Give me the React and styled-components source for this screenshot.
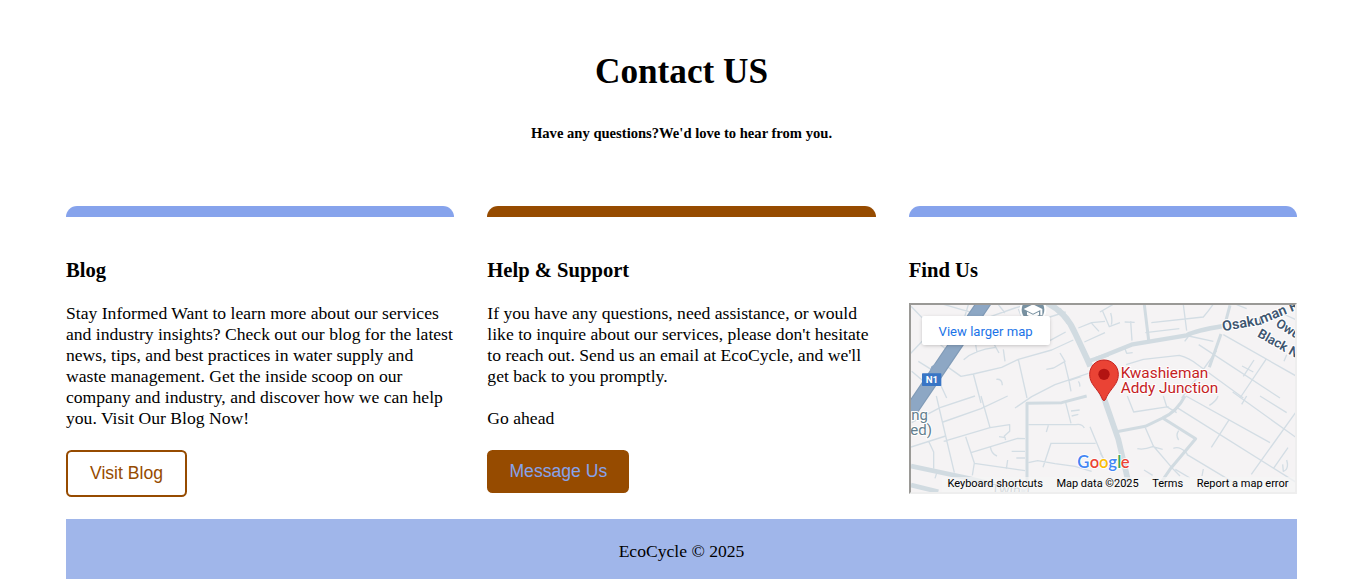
import React from "react";
import styled, { createGlobalStyle } from "styled-components";

const GlobalStyle = createGlobalStyle`
  * { box-sizing: border-box; }
  html, body { margin: 0; background: #fff; overflow: hidden; }
  body {
    color: #000;
    font-family: "Liberation Serif", "Times New Roman", serif;
    font-size: 17.6px;
    line-height: 21px;
  }
`;

const Page = styled.div`
  width: 1231px;
  height: 579px;
  margin-left: 66px;
  display: flex;
  flex-direction: column;
`;

const Header = styled.header`
  height: 206px;
  padding-top: 51px;
  text-align: center;
`;

const Title = styled.h1`
  margin: 0;
  font-size: 35.2px;
  line-height: 41px;
`;

const Subtitle = styled.h5`
  margin: 33px 0 0;
  font-size: 14.6px;
  line-height: 17px;
`;

const Columns = styled.main`
  display: grid;
  grid-template-columns: repeat(3, 1fr);
  column-gap: 33px;
  height: 313px;
`;

const Card = styled.section`
  display: flex;
  flex-direction: column;
  align-items: flex-start;
`;

const Accent = styled.div`
  width: 100%;
  height: 11px;
  border-radius: 11px 11px 0 0;
  background: ${(p) => p.$color};
`;

const CardTitle = styled.h3`
  margin: 42px 0 21px;
  font-size: 20.6px;
  line-height: 23px;
`;

const Text = styled.p`
  margin: 0 0 21px;
  font-size: 17.63px;
  white-space: nowrap;
`;

const Button = styled.button`
  width: ${(p) => p.$width}px;
  height: ${(p) => (p.$filled ? 43 : 47)}px;
  padding: 0;
  border: ${(p) => (p.$filled ? "0" : "2px solid #964b00")};
  border-radius: 5.5px;
  background: ${(p) => (p.$filled ? "#964b00" : "#fff")};
  color: ${(p) => (p.$filled ? "#86a3ec" : "#964b00")};
  font: 17.6px "Liberation Sans", Arial, sans-serif;
`;

const Footer = styled.footer`
  flex: 1;
  padding-top: 22px;
  background: #a0b6ea;
  text-align: center;
`;

const MapFrame = styled.div`
  position: relative;
  width: 100%;
  height: 191px;
  border: 2px solid;
  border-color: #9a9996 #eee #eee #9a9996;
  overflow: hidden;
  font-family: Roboto, sans-serif;
`;

const MapDrawing = styled.svg`
  display: block;
  width: 384px;
  height: 187px;
`;

const LargerMap = styled.a`
  position: absolute;
  top: 11px;
  left: 11px;
  width: 128px;
  height: 29px;
  border-radius: 2px;
  background: #fff;
  box-shadow: 0 1px 4px -1px rgba(0, 0, 0, 0.3);
  color: #1a73e8;
  font-size: 13.1px;
  line-height: 31px;
  text-align: center;
`;

const Credits = styled.div`
  position: absolute;
  right: 0;
  bottom: 0;
  height: 15px;
  padding: 0 6.5px 0 5px;
  display: flex;
  gap: 13.5px;
  background: rgba(245, 245, 245, 0.7);
  color: #000;
  font-size: 11px;
  line-height: 13px;
  white-space: nowrap;
`;

const minorRoads = [
  // north west
  [-18, -21, "M18 25L58 66M15 168L70 110M70 110L125 155M105 16L222 50M190 20L178 60M256 56L330 30L370 18M280 20L300 45M340 33L351 60M130 208L168 235L205 228L290 208L340 184L440 156L505 126M205 228L228 315M340 184L366 300M176 185C200 162 240 152 272 148M212 140L216 163M268 140L282 165M300 190L295 154M425 60L482 42M466 30L486 76L502 82M430 130L482 102M538 132L600 104M520 90L560 74L600 70M560 76L582 100M274 244Q292 242 292 262M330 330L380 296L450 260L550 226M446 210L480 190L465 165M424 214L446 210M478 190L492 248L530 235M492 248L498 280M520 250Q526 257 524 266M40 190L88 220L125 300M20 220L68 260"],
  // north east
  [567, -21, "M0 42L38 20M8 40L28 86L60 74M32 45Q38 65 34 80M92 70L96 128M74 72L104 73M74 150L80 166L98 164M154 74L310 57Q328 36 340 18M250 20L260 98M254 130L266 114L340 130M136 104L238 92M78 200L130 184L238 172Q268 180 290 198L430 300M296 140L540 300M370 110L590 235M350 158L300 228L245 300M498 184L420 300M462 186L430 235M426 204L460 222M552 190L560 170M410 20L440 32M550 48L590 66"],
  // south west
  [-18, 273, "M94 0L122 120L148 230M114 78L228 38L308 0M228 0L255 95L116 136M255 95L314 86V106L298 120L302 132M282 122L302 125M182 122L208 201L202 238M18 153L122 120M72 138L86 168V218M198 170L338 127L360 128M256 151Q259 174 276 180M208 202L360 224M304 219L308 192M320 166H360M334 186H360M482 20L498 82M370 86H512Q530 82 538 96M430 88L424 108M498 45L524 42M500 60L520 55M555 92L604 210M436 142H572M438 142L414 214M370 200L398 194L450 203L510 211L560 226M20 80L105 35L210 0M96 228L90 247"],
  // south east
  [567, 273, "M82 0L101 48L206 32M190 0L200 32L230 50M230 34L590 260M258 0L510 140M328 28Q350 15 354 0M388 70L334 154M425 25L440 0M590 45L454 235M398 -12L590 126M480 0L560 50M564 155L520 218M560 192Q568 220 550 226L548 205M136 95L160 150L220 220L240 240M112 158Q132 162 158 152L188 160M236 104Q226 118 236 132M220 157Q238 150 256 168L262 174M260 175L410 265M226 220L270 246M310 219L306 240M132 222L158 238M0 170L30 220"],
];

const mainRoads = [
  [-18, -21, 18, "M425 14Q485 45 510 105L545 180L556 205"],
  [-18, -21, 12, "M548 190L610 170"],
  [567, -21, 13, "M-14 184L98 139L260 112Q285 98 370 84"],
  [567, -21, 9, "M133 20L146 127M390 22L375 78M363 108L328 208"],
  [-18, 273, 9, "M366 288V22L470 20L545 0"],
  [567, 273, 17, "M0 -20L15 15L55 130L88 270"],
  [567, 273, 9, "M50 107L136 91L188 66Q230 48 255 0M188 66L287 128L210 220L186 255"],
  [-18, 273, 14, "M18 210L190 247L360 288M18 267L100 287"],
];

function Roads() {
  return (
    <g fill="none" strokeLinejoin="round">
      <g stroke="#d3dde4" strokeWidth="4">
        {minorRoads.map(([x, y, d]) => (
          <path key={`${x}${y}`} d={d} transform={`translate(${x} ${y})`} />
        ))}
      </g>
      <g stroke="#d1dbe1">
        {mainRoads.map(([x, y, width, d]) => (
          <path key={d} d={d} strokeWidth={width} transform={`translate(${x} ${y})`} />
        ))}
      </g>
      <path d="M228 -20L88 187L0 317" stroke="#819bb7" strokeWidth="42" />
      <path d="M228 -20L88 187L0 317" stroke="#8da7c4" strokeWidth="35" />
      <path d="M59 198L63 186L83 173" stroke="#8da7c4" strokeWidth="5" />
    </g>
  );
}

function Pin() {
  return (
    <g>
      <path
        d="M579 165C554 165 536 184 536 208C536 226 544 237 554 250C566 265 571 274 574 282Q579 292 584 282C587 274 592 265 604 250C614 237 622 226 622 208C622 184 604 165 579 165Z"
        fill="#ea4335"
        stroke="#c5221f"
        strokeWidth="3"
      />
      <circle cx="579" cy="208" r="17" fill="#b31412" />
    </g>
  );
}

function SchoolMarker() {
  return (
    <g>
      <circle cx="366" cy="14" r="40" fill="#fff" />
      <circle cx="366" cy="14" r="34" fill="#7891a1" />
      <path d="M338 12L366 -2L394 12V31H388V15L366 26Z" fill="#fff" />
      <path d="M348 20L366 29L384 20V30L366 39L348 30Z" fill="#fff" />
    </g>
  );
}

const googleLetters = [
  ["G", "#4285f4", 0],
  ["o", "#ea4335", 37],
  ["o", "#fbbc05", 65],
  ["g", "#4285f4", 93],
  ["l", "#34a853", 120],
  ["e", "#ea4335", 130],
];

function StreetMap() {
  return (
    <MapDrawing viewBox="0 0 1152 561" fontFamily="Roboto, sans-serif">
      <rect width="1152" height="561" fill="#f5f3f4" />
      <Roads />
      <SchoolMarker />
      <g paintOrder="stroke" stroke="#fff" strokeWidth="6" strokeLinejoin="round">
        <g fill="#3e5670" fontWeight="600">
          <text transform="translate(936 79) rotate(-10)" fontSize="43">Osaku</text>
          <text transform="translate(1052 57) rotate(-22)" fontSize="43">man R</text>
          <text transform="translate(1092 62) rotate(32)" fontSize="39">Owu</text>
          <text transform="translate(1037 94) rotate(29)" fontSize="39">Black Ni</text>
        </g>
        <g fill="#637e8d" fontSize="45">
          <text x="1" y="346" textLength="50" lengthAdjust="spacingAndGlyphs">ng</text>
          <text x="-2" y="389" textLength="65" lengthAdjust="spacingAndGlyphs">ed)</text>
        </g>
        <g fill="#c5221f" fontSize="44">
          <text x="629" y="219" textLength="263" lengthAdjust="spacingAndGlyphs">Kwashieman</text>
          <text x="629" y="265" textLength="293" lengthAdjust="spacingAndGlyphs">Addy Junction</text>
        </g>
        <text x="240" y="566" fill="#8d9ca6" fontSize="42" transform="rotate(3 240 560)">Twin T</text>
      </g>
      <rect x="33" y="205" width="58" height="38" rx="2" fill="#3975c5" />
      <text x="44" y="234" fill="#fff" fontSize="29" fontWeight="700">N1</text>
      <Pin />
      <g
        fontFamily="Lato, sans-serif"
        fontSize="50"
        paintOrder="stroke"
        stroke="#fff"
        strokeWidth="5"
      >
        {googleLetters.map(([letter, color, x]) => (
          <text key={x} x={499 + x} y="489" fill={color} fontWeight="600">
            {letter}
          </text>
        ))}
      </g>
    </MapDrawing>
  );
}

export default function App() {
  return (
    <>
      <GlobalStyle />
      <Page>
        <Header>
          <Title>Contact US</Title>
          <Subtitle>Have any questions?We'd love to hear from you.</Subtitle>
        </Header>
        <Columns>
          <Card>
            <Accent $color="#86a3ec" />
            <CardTitle>Blog</CardTitle>
            <Text>
              Stay Informed Want to learn more about our services
              <br />
              and industry insights? Check out our blog for the latest
              <br />
              news, tips, and best practices in water supply and
              <br />
              waste management. Get the inside scoop on our
              <br />
              company and industry, and discover how we can help
              <br />
              you. Visit Our Blog Now!
            </Text>
            <Button $width={121}>Visit Blog</Button>
          </Card>
          <Card>
            <Accent $color="#964b00" />
            <CardTitle>Help &amp; Support</CardTitle>
            <Text>
              If you have any questions, need assistance, or would
              <br />
              like to inquire about our services, please don't hesitate
              <br />
              to reach out. Send us an email at EcoCycle, and we'll
              <br />
              get back to you promptly.
            </Text>
            <Text>Go ahead</Text>
            <Button $filled $width={142}>
              Message Us
            </Button>
          </Card>
          <Card>
            <Accent $color="#86a3ec" />
            <CardTitle>Find Us</CardTitle>
            <MapFrame>
              <StreetMap />
              <LargerMap>View larger map</LargerMap>
              <Credits>
                <span>Keyboard shortcuts</span>
                <span>Map data ©2025</span>
                <span>Terms</span>
                <span>Report a map error</span>
              </Credits>
            </MapFrame>
          </Card>
        </Columns>
        <Footer>EcoCycle © 2025</Footer>
      </Page>
    </>
  );
}
